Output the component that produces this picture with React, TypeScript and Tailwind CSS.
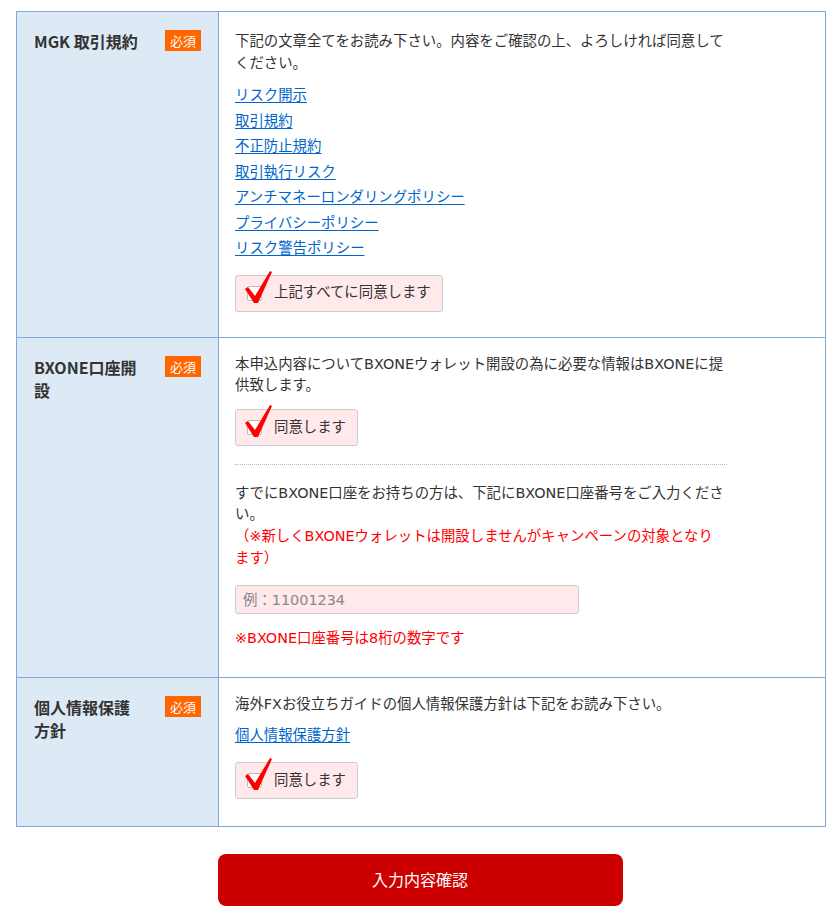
import React from 'react';

const cjk = { fontFamily: '"Noto Sans CJK JP", sans-serif' };

const Badge = () => (
  <span className="bg-[#ff6600] text-white text-[13px] leading-[21px] px-[5px] h-[21px] shrink-0" style={cjk}>必須</span>
);

const CheckMark = () => (
  <svg className="absolute left-[-3px] top-[-16px] pointer-events-none" width="30" height="34" viewBox="0 0 30 34">
    <polygon points="0,18 3,16 10,25 25,0 27,1 13,32 9,32" fill="#ff0000" />
  </svg>
);

const AgreeBox = ({ label }: { label: string }) => (
  <label className="inline-flex items-center h-[37px] pl-[11px] pr-[11px] bg-[#ffe9ea] border border-[#cccccc] rounded-[3px] cursor-pointer">
    <span className="relative w-[15px] h-[15px] bg-white border border-[#bbbbbb] rounded-[2px] shrink-0">
      <CheckMark />
    </span>
    <span className="ml-[12px] text-[14.4px] text-[#333333]">{label}</span>
  </label>
);

const Row = ({ title, children, last }: { title: React.ReactNode; children: React.ReactNode; last?: boolean }) => (
  <div className={`flex ${last ? '' : 'border-b border-[#80a8e0]'}`}>
    <div className="w-[202px] shrink-0 bg-[#dde9f5] border-r border-[#80a8e0] pl-[17px] pr-[17px] pt-[18px] flex justify-between items-start">
      <div className="text-[16px] font-bold leading-[23px] text-[#333333]" style={cjk}>{title}</div>
      <Badge />
    </div>
    <div className="flex-1 pl-[16px] pr-[16px]">{children}</div>
  </div>
);

const links = [
  'リスク開示',
  '取引規約',
  '不正防止規約',
  '取引執行リスク',
  'アンチマネーロンダリングポリシー',
  'プライバシーポリシー',
  'リスク警告ポリシー',
];

export default function App() {
  return (
    <div className="bg-white min-h-[919px] pt-[11px] text-[#333333] text-[14.4px] leading-[21.6px]" style={{ fontFamily: '"DejaVu Sans", "Noto Sans CJK JP", sans-serif' }}>
      <div className="ml-[16px] w-[810px] border border-[#80a8e0]">
        <Row title="MGK 取引規約">
          <div className="max-w-[492px] pt-[19px] pb-[25px]">
            <p>下記の文章全てをお読み下さい。内容をご確認の上、よろしければ同意してください。</p>
            <ul className="mt-[11px] flex flex-col gap-[3.9px]">
              {links.map((l) => (
                <li key={l}>
                  <a href="#" className="text-[#0066cc] underline underline-offset-2">{l}</a>
                </li>
              ))}
            </ul>
            <div className="mt-[15px]">
              <AgreeBox label="上記すべてに同意します" />
            </div>
          </div>
        </Row>
        <Row title={<>BXONE口座開<br />設</>}>
          <div className="max-w-[492px] pt-[16px] pb-[27px]">
            <p>本申込内容についてBXONEウォレット開設の為に必要な情報はBXONEに提供致します。</p>
            <div className="mt-[12px]">
              <AgreeBox label="同意します" />
            </div>
            <div className="mt-[18px] border-t border-dotted border-[#bbbbbb]" />
            <p className="mt-[18px]">すでにBXONE口座をお持ちの方は、下記にBXONE口座番号をご入力ください。</p>
            <p className="text-[#ff0000]">（※新しくBXONEウォレットは開設しませんがキャンペーンの対象となります）</p>
            <input
              type="text"
              placeholder="例：11001234"
              className="mt-[16px] block w-[344px] h-[29px] bg-[#ffe9ea] border border-[#cccccc] rounded-[3px] px-[7px] text-[14.4px] placeholder-[#888888] outline-none"
            />
            <p className="mt-[14px] text-[#ff0000]">※BXONE口座番号は8桁の数字です</p>
          </div>
        </Row>
        <Row title={<>個人情報保護<br />方針</>} last>
          <div className="max-w-[492px] pt-[16px] pb-[27px]">
            <p>海外FXお役立ちガイドの個人情報保護方針は下記をお読み下さい。</p>
            <p className="mt-[10px]">
              <a href="#" className="text-[#0066cc] underline underline-offset-2">個人情報保護方針</a>
            </p>
            <div className="mt-[15px]">
              <AgreeBox label="同意します" />
            </div>
          </div>
        </Row>
      </div>
      <div className="flex justify-center mt-[27px]">
        <button className="w-[405px] h-[52px] bg-[#cc0000] rounded-[8px] text-white text-[16px]" style={cjk}>入力内容確認</button>
      </div>
    </div>
  );
}
